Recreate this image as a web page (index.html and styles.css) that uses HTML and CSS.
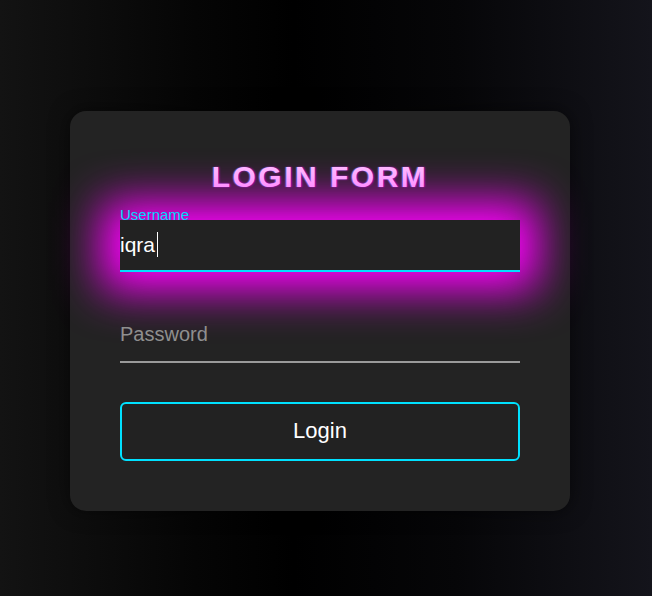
FILE: index.html
```html
<!DOCTYPE html>
<html lang="en">
<head>
<meta charset="utf-8">
<title>Login Form</title>
<link rel="stylesheet" href="styles.css">
</head>
<body>
  <form class="card" onsubmit="return false">
    <h1 class="title">LOGIN FORM</h1>
    <div class="field field-active">
      <label class="float-label" for="user">Username</label>
      <input id="user" class="input input-active" type="text" value="iqra">
      <span class="caret"></span>
    </div>
    <div class="field">
      <input class="input" type="password" placeholder="Password">
    </div>
    <button class="btn" type="submit">Login</button>
  </form>
</body>
</html>
```
FILE: styles.css
```css
* { box-sizing: border-box; }
html, body { height: 100%; }
body {
  margin: 0;
  padding: 111px 0 0 70px;
  background: linear-gradient(90deg, #131313 0%, #050505 30%, #000 45%, #060608 70%, #14141b 100%);
  font-family: "Liberation Sans", Arial, sans-serif;
  overflow: hidden;
}
.card {
  width: 500px;
  height: 400px;
  padding: 50px;
  background: #232323;
  border-radius: 16px;
  box-shadow: 0 0 20px rgba(0,0,0,0.5);
  display: flex;
  flex-direction: column;
}
.title {
  margin: 0 0 27px;
  height: 32px;
  font-size: 30px;
  line-height: 32px;
  font-weight: bold;
  letter-spacing: 2.5px;
  text-align: center;
  color: #ffbfff;
  text-shadow: -1px 0 1px rgba(90,140,255,0.7), 1px 0 2px rgba(255,0,255,0.6);
}
.field {
  position: relative;
  height: 52px;
  margin-bottom: 39px;
}
.input {
  display: block;
  width: 100%;
  height: 52px;
  padding: 8px 0 12px;
  border: none;
  border-bottom: 2px solid #9a9a9a;
  background: transparent;
  color: #fff;
  font-family: "Liberation Sans", Arial, sans-serif;
  font-size: 20px;
  outline: none;
  caret-color: transparent;
}
.input::placeholder { color: #8f8f8f; }
.input-active {
  padding: 10px 0;
  font-size: 21px;
  background: #222;
  border-bottom-color: #00e1ff;
  box-shadow: 0 0 45px 18px #f0f;
}
.float-label {
  position: absolute;
  left: 0;
  top: -14px;
  font-size: 15px;
  line-height: 17px;
  color: #00d9ff;
  z-index: 1;
}
.caret {
  position: absolute;
  left: 37px;
  top: 12px;
  width: 1px;
  height: 25px;
  background: #fff;
}
.btn {
  height: 60px;
  width: 100%;
  padding: 0 0 2px;
  border: 2px solid #00e1ff;
  border-radius: 6px;
  background: #222;
  color: #fff;
  font-family: "Liberation Sans", Arial, sans-serif;
  font-size: 22px;
  cursor: pointer;
}
```
